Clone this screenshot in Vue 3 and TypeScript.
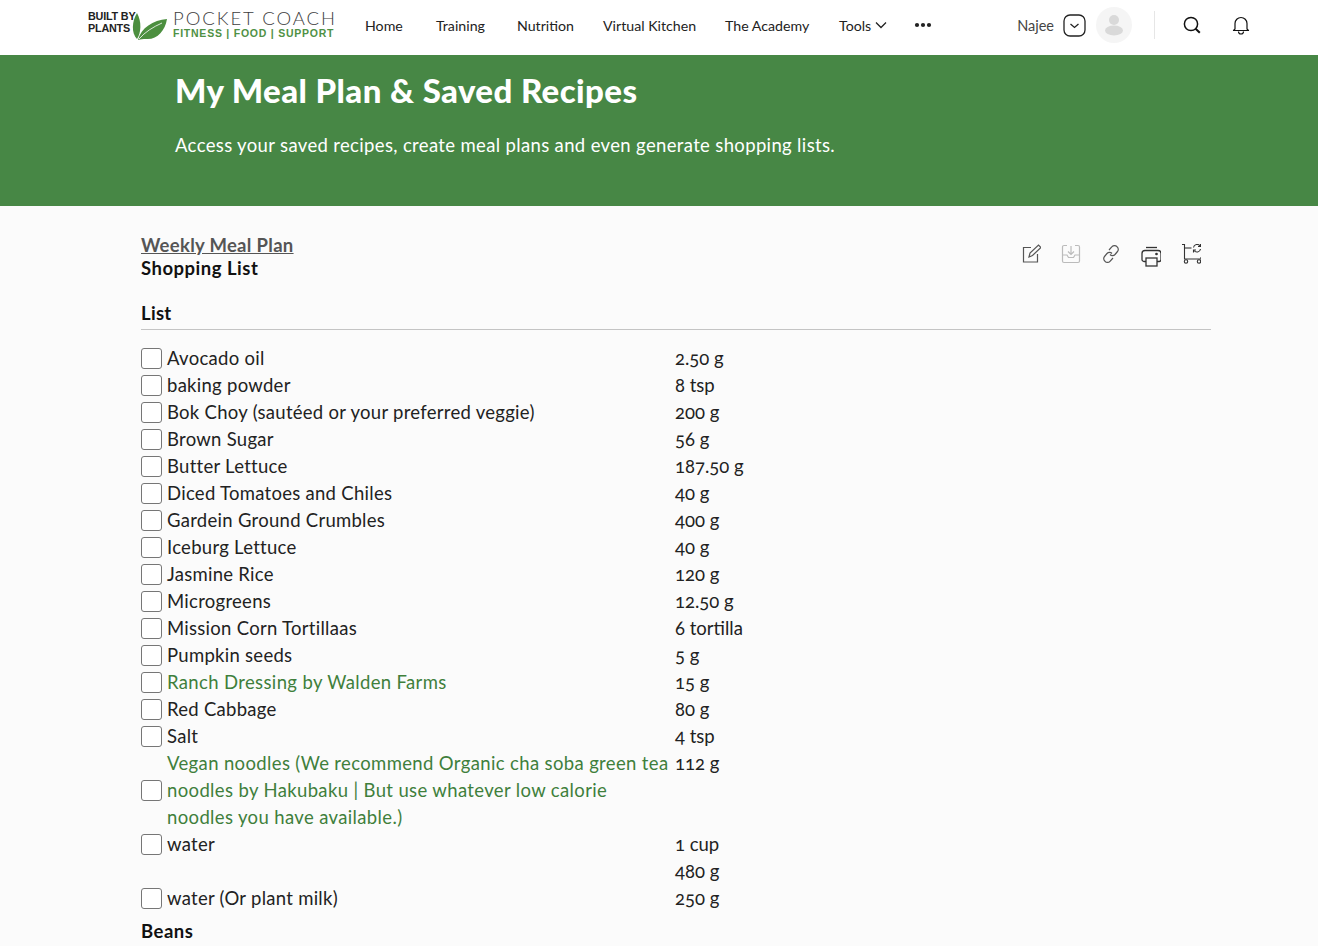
<script setup lang="ts">
interface Item { lines: string[]; qty: string; link?: boolean; noBox?: boolean }
const nav: string[] = ['Home', 'Training', 'Nutrition', 'Virtual Kitchen', 'The Academy']
const items: Item[] = [
  { lines: ['Avocado oil'], qty: '2.50 g' },
  { lines: ['baking powder'], qty: '8 tsp' },
  { lines: ['Bok Choy (sautéed or your preferred veggie)'], qty: '200 g' },
  { lines: ['Brown Sugar'], qty: '56 g' },
  { lines: ['Butter Lettuce'], qty: '187.50 g' },
  { lines: ['Diced Tomatoes and Chiles'], qty: '40 g' },
  { lines: ['Gardein Ground Crumbles'], qty: '400 g' },
  { lines: ['Iceburg Lettuce'], qty: '40 g' },
  { lines: ['Jasmine Rice'], qty: '120 g' },
  { lines: ['Microgreens'], qty: '12.50 g' },
  { lines: ['Mission Corn Tortillaas'], qty: '6 tortilla' },
  { lines: ['Pumpkin seeds'], qty: '5 g' },
  { lines: ['Ranch Dressing by Walden Farms'], qty: '15 g', link: true },
  { lines: ['Red Cabbage'], qty: '80 g' },
  { lines: ['Salt'], qty: '4 tsp' },
  { lines: ['Vegan noodles (We recommend Organic cha soba green tea', 'noodles by Hakubaku | But use whatever low calorie', 'noodles you have available.)'], qty: '112 g', link: true },
  { lines: ['water'], qty: '1 cup' },
  { lines: [''], qty: '480 g', noBox: true },
  { lines: ['water (Or plant milk)'], qty: '250 g' },
]
</script>

<template>
  <div class="page">
    <header class="topbar">
      <div class="logo">
        <div class="bbp">BUILT BY<br />PLANTS</div>
        <svg class="leaves" width="36" height="29" viewBox="0 0 36 29">
          <path d="M6 1C1 9 0 21 6 27c4-6 5-17 0-26z" fill="#4c8f3f" />
          <path d="M7 28C10 16 22 8 36 7c-2 12-10 21-21 20-3 0-5 0-8 1z" fill="#4c8f3f" />
          <path d="M8 27c6-7 14-12 23-16" stroke="#fff" stroke-width="0.8" fill="none" />
        </svg>
        <div class="pc">
          <div class="pc-top">POCKET COACH</div>
          <div class="pc-sub">FITNESS | FOOD | SUPPORT</div>
        </div>
      </div>
      <nav class="nav">
        <span v-for="n in nav" :key="n" class="nav-item">{{ n }}</span>
        <span class="nav-item tools">Tools
          <svg width="12" height="8" viewBox="0 0 12 8"><path d="M1 1.500l5 5 5-5" fill="none" stroke="#222" stroke-width="1.3" /></svg>
        </span>
        <svg class="dots" width="18" height="6" viewBox="0 0 18 6"><circle cx="3" cy="3" r="2.100" /><circle cx="9" cy="3" r="2.100" /><circle cx="15" cy="3" r="2.100" /></svg>
      </nav>
      <div class="user">
        <span class="uname">Najee</span>
        <svg class="ubtn" width="23" height="23" viewBox="0 0 23 23"><rect x="1" y="1" width="21" height="21" rx="6" fill="none" stroke="#222" stroke-width="1.3" /><path d="M7.500 10l4 3.500 4-3.500" fill="none" stroke="#222" stroke-width="1.3" /></svg>
        <svg class="avatar" width="36" height="36" viewBox="0 0 36 36"><circle cx="18" cy="18" r="18" fill="#f5f5f5" /><circle cx="18" cy="13" r="5" fill="#d9d9d9" /><ellipse cx="18" cy="23.500" rx="9" ry="5" fill="#d9d9d9" /></svg>
        <span class="sep"></span>
        <svg class="search" width="20" height="20" viewBox="0 0 20 20"><circle cx="9" cy="9" r="6.600" fill="none" stroke="#111" stroke-width="1.500" /><path d="M13.600 13.800l4.200 4" stroke="#111" stroke-width="2" /></svg>
        <svg class="bell" width="18" height="20" viewBox="0 0 18 20"><path d="M3 14V8.500a6 6 0 0 1 12 0V14l1.500 1.500h-15z" fill="none" stroke="#111" stroke-width="1.200" stroke-linejoin="round" /><path d="M6.500 16.500a2.500 2.500 0 0 0 5 0" fill="none" stroke="#111" stroke-width="1.200" /></svg>
      </div>
    </header>

    <section class="hero">
      <h1>My Meal Plan &amp; Saved Recipes</h1>
      <p>Access your saved recipes, create meal plans and even generate shopping lists.</p>
    </section>

    <main class="content">
      <div class="head">
        <div>
          <a class="weekly">Weekly Meal Plan</a>
          <div class="shop">Shopping List</div>
        </div>
        <div class="tools-row">
          <svg width="20" height="20" viewBox="0 0 20 20" fill="none" stroke="#555" stroke-width="1.200"><path d="M10 3.500H2.500V18h14v-8" /><path d="M8 13l1-4 8.500-8 2.500 2.500-8.500 8z" /></svg>
          <svg width="20" height="20" viewBox="0 0 20 20" fill="none" stroke="#bbb" stroke-width="1.200"><path d="M6 1.500H3a1.500 1.500 0 0 0-1.500 1.500v14A1.500 1.500 0 0 0 3 18.500h14a1.500 1.500 0 0 0 1.500-1.500V3A1.500 1.500 0 0 0 17 1.500h-3" /><path d="M1.500 11H6l1.500 2.500h5L14 11h4.500" /><path d="M10 2v8M7 7.500l3 3 3-3" /></svg>
          <svg width="20" height="20" viewBox="0 0 20 20" fill="none" stroke="#555" stroke-width="1.200"><path d="M8 6l3-3.300a3.300 3.300 0 0 1 5 0 3.400 3.400 0 0 1 .5 4.800L14 10.500a3.400 3.400 0 0 1-5 0" /><path d="M12 14l-3 3.300a3.300 3.300 0 0 1-5 0 3.400 3.400 0 0 1-.5-4.800L6 9.500a3.400 3.400 0 0 1 5 0" /></svg>
          <svg class="print" width="20" height="22" viewBox="0 0 20 22" fill="none" stroke="#333" stroke-width="1.300"><path d="M5 2.500h11" /><path d="M5 16.500H3a2 2 0 0 1-2-2V8.500a3 3 0 0 1 3-3h13a3 3 0 0 1 3 3v6a2 2 0 0 1-2 2h-2" /><rect x="5" y="13" width="11" height="8" /><circle cx="15.500" cy="9" r="0.700" fill="#333" /></svg>
          <svg width="20" height="20" viewBox="0 0 20 20" fill="none" stroke="#333" stroke-width="1.100"><path d="M1 0.500h2.500V15H20v-2" /><path d="M3.500 4h7" /><circle cx="5" cy="17.500" r="1.700" /><circle cx="18" cy="17.500" r="1.700" /><path d="M12.500 3.500a3.600 3.600 0 0 1 6.500-1.500M19.500 5a3.600 3.600 0 0 1-6.500 1.500" /><path d="M19.500 0v2.500H17M12.500 8.500V6H15" /></svg>
        </div>
      </div>

      <h2 class="list-title">List</h2>
      <div class="rows">
        <div v-for="(it, i) in items" :key="i" class="row">
          <span class="boxcell"><span v-if="!it.noBox" class="box"></span></span>
          <span class="name" :class="{ link: it.link }"><span v-for="l in it.lines" :key="l" class="line">{{ l }}</span></span>
          <span class="qty">{{ it.qty }}</span>
        </div>
      </div>
      <h2 class="beans">Beans</h2>
    </main>
  </div>
</template>

<style>
html, body { margin: 0; background: #fbfbfb; }
</style>

<style scoped>
.page { height: 946px; overflow: hidden; font-family: "Lato", "Open Sans", sans-serif; color: #222; background: #fbfbfb; }
.topbar { height: 55px; background: #fff; display: flex; align-items: center; padding: 0 0 5px 88px; box-sizing: border-box; }
.logo { display: flex; align-items: center; width: 277px; flex: none; }
.bbp { font: 700 10.800px/12px "Liberation Sans", sans-serif; color: #222; width: 43px; letter-spacing: -0.2px; margin-top: -6px; white-space: nowrap; }
.leaves { margin-top: 3px; flex: none; }
.pc { margin-left: 6px; margin-top: -1px; }
.pc-top { font: 300 18.500px/16px "Lato", sans-serif; color: #3d3d3d; letter-spacing: 1.950px; white-space: nowrap; }
.pc-sub { font: 700 10.500px/14px "Liberation Sans", sans-serif; color: #4f9144; letter-spacing: 0.760px; white-space: nowrap; }
.nav { display: grid; grid-template-columns: 71px 81px 86px 122px 114px 75px auto; align-items: center; font-size: 14.200px; color: #222; }
.nav-item { white-space: nowrap; }
.tools { display: flex; align-items: center; gap: 4px; }
.dots { fill: #222; }
.user { margin-left: auto; display: flex; align-items: center; padding-right: 68px; }
.uname { font-size: 14.500px; color: #444; margin-right: 9px; }
.avatar { margin-left: 10px; }
.sep { width: 1px; height: 28px; background: #e6e6e6; margin-left: 22px; }
.search { margin-left: 27px; }
.bell { margin-left: 30px; }
.hero { height: 151px; background: #478745; color: #fff; padding-left: 175px; box-sizing: border-box; }
.hero h1 { margin: 0; padding-top: 15px; font-size: 33px; line-height: 40px; font-weight: 900; letter-spacing: 0.4px; }
.hero p { margin: 23px 0 0; font-size: 18.500px; line-height: 24px; letter-spacing: 0.35px; }
.content { padding: 28px 107px 0 141px; }
.head { display: flex; justify-content: space-between; align-items: flex-start; }
.weekly { display: block; font-size: 18.500px; line-height: 23px; font-weight: 700; color: #555; text-decoration: underline; letter-spacing: 0.3px; }
.shop { font-size: 18.500px; line-height: 23px; font-weight: 700; color: #111; letter-spacing: 0.5px; }
.tools-row { display: flex; align-items: flex-start; gap: 20px; padding-top: 10px; padding-right: 10px; }
.print { margin-top: 1px; }
.list-title { margin: 21px 0 0; padding-bottom: 4px; font-size: 18.500px; line-height: 24px; font-weight: 700; color: #111; border-bottom: 1px solid #c4c4c4; letter-spacing: 0.3px; }
.rows { margin-top: 15px; font-size: 18.500px; line-height: 27px; color: #222; letter-spacing: 0.28px; }
.row { display: grid; grid-template-columns: 26px 508px auto; align-items: center; }
.name { display: block; white-space: nowrap; }
.name.link { color: #3f7f3c; letter-spacing: 0.36px; }
.line { display: block; min-height: 27px; }
.qty { align-self: start; font-feature-settings: "onum"; letter-spacing: 0; }
.boxcell { display: flex; align-items: center; }
.box { width: 19px; height: 19px; border: 1px solid #767676; border-radius: 3px; background: #fff; display: block; }
.beans { margin: 6px 0 0; font-size: 18.500px; line-height: 27px; font-weight: 700; color: #111; letter-spacing: 0.5px; }
</style>
